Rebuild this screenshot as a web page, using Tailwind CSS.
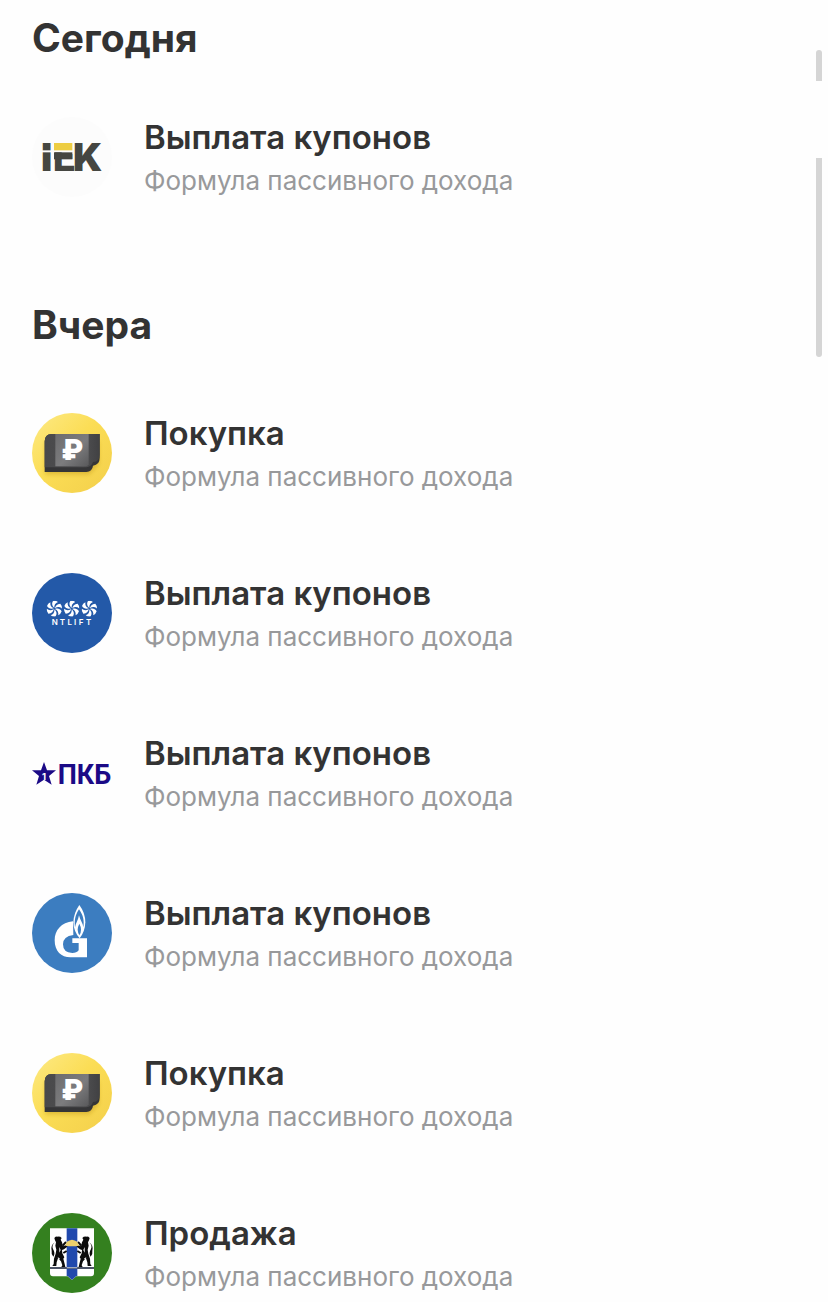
<!DOCTYPE html>
<html lang="ru">
<head>
<meta charset="utf-8">
<meta name="viewport" content="width=device-width, initial-scale=1">
<title>Операции</title>
<script src="https://cdn.jsdelivr.net/npm/@tailwindcss/browser@4"></script>
</head>
<body class="relative bg-[#fefefe] font-['Inter','Noto_Sans',sans-serif] text-[#333333]">

<!-- Shared artwork -->
<svg class="absolute size-0" aria-hidden="true">
  <defs>
    <linearGradient id="gold" x1="0" y1="0" x2="1" y2="1">
      <stop offset="0" stop-color="#fdea86"/><stop offset=".45" stop-color="#fbdd55"/><stop offset="1" stop-color="#f3cf4b"/>
    </linearGradient>
    <linearGradient id="noteFace" x1="0" y1="0" x2="1" y2="1">
      <stop offset="0" stop-color="#6c6c6e"/><stop offset=".55" stop-color="#7c7c7e"/><stop offset="1" stop-color="#59595b"/>
    </linearGradient>
    <linearGradient id="noteSide" x1="0" y1="0" x2="1" y2="0">
      <stop offset="0" stop-color="#49494b"/><stop offset=".7" stop-color="#505052"/><stop offset="1" stop-color="#414143"/>
    </linearGradient>
    <filter id="soft" x="-20%" y="-20%" width="140%" height="150%"><feGaussianBlur stdDeviation="6"/></filter>
    <symbol id="money" viewBox="24 24 240 240">
      <circle cx="144" cy="144" r="120" fill="url(#gold)"/>
      <path d="M64 110h160v66l-28 32H64z" fill="#b98f16" opacity=".45" filter="url(#soft)"/>
      <path d="M62 109q0-21 21-22H227V160q0 20-20 22-2 18-20 19H62z" fill="#353537"/>
      <path d="M62 109q0-21 21-22H227V149q0 20-20 22-5 15-20 16H62z" fill="url(#noteSide)"/>
      <path d="M94 87h100v91q-3 6-9 6H94z" fill="url(#noteFace)"/>
      <text x="144" y="166" font-family="Inter, sans-serif" font-weight="900" font-size="84" fill="#fff" text-anchor="middle">₽</text>
    </symbol>
    <symbol id="turbine" viewBox="-24 -24 48 48">
      <g fill="#fff">
        <path id="blade" d="M0-2C-6-7-9-15-4-23Q4-25 11-20C3-17-1-11 0-2z"/>
        <use href="#blade" transform="rotate(60)"/>
        <use href="#blade" transform="rotate(120)"/>
        <use href="#blade" transform="rotate(180)"/>
        <use href="#blade" transform="rotate(240)"/>
        <use href="#blade" transform="rotate(300)"/>
      </g>
    </symbol>
    <g id="beast">
      <path d="M91 99q4-5 10-4 8-1 12 4l-3 5 4 8 3 12 11-5 2 6-10 8-6 2 1 10 6 12-3 4 4 16 2 9h-12l3-5-4-12-9-9-4 12-1 11H85l4-6 1-16 5-15 2-12-3-12 2-10-3-6z" fill="#0b0b0b"/>
      <path d="M93 112q-11 9-6 20 8 13 1 23-7-7-5-18-4-17 10-25z" fill="#0b0b0b"/>
      <path d="M106 126l4 9-4 8zM101 156l7 5-4 4z" fill="#fff"/>
      <path d="M116 122l10-11M118 144l10-6" stroke="#0b0b0b" stroke-width="6" fill="none"/>
    </g>
  </defs>
</svg>

<main class="px-8">
  <section>
    <h2 class="pt-3.5 text-[39px] leading-12 font-bold">Сегодня</h2>
    <ul class="pt-[15px]">
      <li class="flex h-40 items-center gap-8">
        <svg class="size-20 shrink-0" viewBox="24 24 240 240" role="img" aria-label="IEK">
          <circle cx="144" cy="144" r="120" fill="#fcfcfc"/>
          <g font-weight="900" fill="#454641">
            <text x="51" y="186" font-family="Inter, sans-serif" font-size="116">I</text>
            <text x="86" y="186" font-family="Roboto, sans-serif" font-size="118">E</text>
          </g>
          <path d="M54 124h34v6H54z" fill="#fcfcfc"/>
          <path d="M86 99h70v31H86z" fill="#fcfcfc"/>
          <path d="M90 102h55v22H90z" fill="#edcd42"/>
          <path d="M90 130h55v21H90z" fill="#454641"/>
          <text x="147" y="186" font-family="Inter, sans-serif" font-weight="900" font-size="116" fill="#454641">K</text>
        </svg>
        <div class="min-w-0 pt-1">
          <h3 class="text-[33px] leading-10 font-semibold">Выплата купонов</h3>
          <p class="pt-1 text-[26px] leading-10 text-[#98999b]">Формула пассивного дохода</p>
        </div>
      </li>
    </ul>
  </section>

  <section class="pt-12">
    <h2 class="pt-4 text-[39px] leading-12 font-bold">Вчера</h2>
    <ul class="pt-6">
      <li class="flex h-40 items-center gap-8">
        <svg class="size-20 shrink-0" aria-hidden="true"><use href="#money"/></svg>
        <div class="min-w-0 pt-1">
          <h3 class="text-[33px] leading-10 font-semibold">Покупка</h3>
          <p class="pt-1 text-[26px] leading-10 text-[#98999b]">Формула пассивного дохода</p>
        </div>
      </li>
      <li class="flex h-40 items-center gap-8">
        <svg class="size-20 shrink-0" viewBox="24 24 240 240" role="img" aria-label="NTLIFT">
          <circle cx="144" cy="144" r="120" fill="#2359a8"/>
          <use href="#turbine" x="67" y="107" width="48" height="48"/>
          <use href="#turbine" x="119" y="107" width="48" height="48"/>
          <use href="#turbine" x="172" y="107" width="48" height="48"/>
          <g font-family="Inter, sans-serif" font-weight="600" font-size="24" fill="#fff" text-anchor="middle">
            <text x="92" y="181">N</text><text x="115" y="181">T</text><text x="137" y="181">L</text><text x="153" y="181">I</text><text x="171" y="181">F</text><text x="194" y="181">T</text>
          </g>
        </svg>
        <div class="min-w-0 pt-1">
          <h3 class="text-[33px] leading-10 font-semibold">Выплата купонов</h3>
          <p class="pt-1 text-[26px] leading-10 text-[#98999b]">Формула пассивного дохода</p>
        </div>
      </li>
      <li class="flex h-40 items-center gap-8">
        <svg class="size-20 shrink-0" viewBox="24 24 240 240" role="img" aria-label="ПКБ">
          <path d="M60 111l9 25h27l-21 17 8 26-23-15-23 15 8-26-21-17h27z" fill="#1b0a86"/>
          <text x="60" y="164" font-family="Inter, sans-serif" font-weight="700" font-size="28" fill="#fff" text-anchor="middle">1</text>
          <text x="101" y="176" font-family="Roboto, sans-serif" font-weight="700" font-size="81" fill="#1b0a86">ПКБ</text>
        </svg>
        <div class="min-w-0 pt-1">
          <h3 class="text-[33px] leading-10 font-semibold">Выплата купонов</h3>
          <p class="pt-1 text-[26px] leading-10 text-[#98999b]">Формула пассивного дохода</p>
        </div>
      </li>
      <li class="flex h-40 items-center gap-8">
        <svg class="size-20 shrink-0" viewBox="24 24 240 240" role="img" aria-label="Газпром">
          <circle cx="144" cy="144" r="120" fill="#3c7dc0"/>
          <path d="M147 109C112 112 92 136 92 166C92 199 112 217 139 217H189V160H145V174H164V196Q158 204 145 204Q117 203 117 178Q117 154 148 150z" fill="#fff"/>
          <path d="M166 60Q184 84 184 112Q183 140 167 160Q149 140 148 112Q149 84 166 60z" fill="#fff"/>
          <path d="M165 73C153 91 151 107 153 127C155 115 163 105 165 91C168 105 177 115 178 127C181 107 178 91 165 73z" fill="#3c7dc0"/>
          <path d="M166 116Q161 125 161 135Q162 145 166 151Q171 144 171 134Q171 125 166 116z" fill="#3c7dc0"/>
        </svg>
        <div class="min-w-0 pt-1">
          <h3 class="text-[33px] leading-10 font-semibold">Выплата купонов</h3>
          <p class="pt-1 text-[26px] leading-10 text-[#98999b]">Формула пассивного дохода</p>
        </div>
      </li>
      <li class="flex h-40 items-center gap-8">
        <svg class="size-20 shrink-0" aria-hidden="true"><use href="#money"/></svg>
        <div class="min-w-0 pt-1">
          <h3 class="text-[33px] leading-10 font-semibold">Покупка</h3>
          <p class="pt-1 text-[26px] leading-10 text-[#98999b]">Формула пассивного дохода</p>
        </div>
      </li>
      <li class="-mb-10 flex h-40 items-center gap-8">
        <svg class="size-20 shrink-0" viewBox="24 24 240 240" role="img" aria-label="Новосибирская область">
          <circle cx="144" cy="144" r="120" fill="#34801f"/>
          <path d="M78 70H210V205Q210 214 201 214H157L144 225L131 214H87Q78 214 78 205z" fill="#fff"/>
          <path d="M128 70H160V213H157L144 225L131 213H128z" fill="#2149ad"/>
          <path d="M78 187H210V191H78z" fill="#111a33"/>
          <path d="M128 187H160V190H128z" fill="#e7edf7"/>
          <use href="#beast"/>
          <use href="#beast" transform="translate(288 0) scale(-1 1)"/>
          <path d="M124 122Q126 106 144 104Q162 106 165 122Q144 126 124 122z" fill="#ecd06d"/>
        </svg>
        <div class="min-w-0 pt-1">
          <h3 class="text-[33px] leading-10 font-semibold">Продажа</h3>
          <p class="pt-1 text-[26px] leading-10 text-[#98999b]">Формула пассивного дохода</p>
        </div>
      </li>
    </ul>
  </section>
</main>

<!-- Scroll indicator, in two visible pieces -->
<div class="absolute top-[50px] right-1.5 h-[31px] w-1.5 rounded-t-full bg-[#d5d5d5]" aria-hidden="true"></div>
<div class="absolute top-[158px] right-1.5 h-[199px] w-1.5 rounded-b-full bg-[#d5d5d5]" aria-hidden="true"></div>
</body>
</html>
